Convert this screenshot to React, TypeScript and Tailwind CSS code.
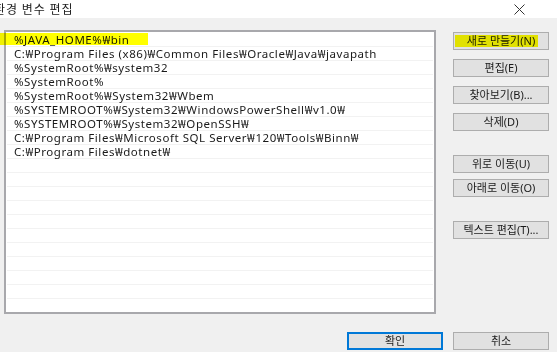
import React from "react";

const rows = [
  "%JAVA_HOME%₩bin",
  "C:₩Program Files (x86)₩Common Files₩Oracle₩Java₩javapath",
  "%SystemRoot%₩system32",
  "%SystemRoot%",
  "%SystemRoot%₩System32₩Wbem",
  "%SYSTEMROOT%₩System32₩WindowsPowerShell₩v1.0₩",
  "%SYSTEMROOT%₩System32₩OpenSSH₩",
  "C:₩Program Files₩Microsoft SQL Server₩120₩Tools₩Binn₩",
  "C:₩Program Files₩dotnet₩",
  "",
  "",
  "",
  "",
  "",
  "",
  "",
  "",
  "",
  "",
];

function Btn({ label, cls = "" }: { label: string; cls?: string }) {
  return (
    <div
      className={`h-[18px] w-[96px] bg-[#e1e1e1] border border-[#adadad] flex items-center justify-center text-[11px] text-[#1a1a1a] ${cls}`}
    >
      {label}
    </div>
  );
}

export default function App() {
  return (
    <div
      className="relative w-[557px] h-[352px] bg-[#f0f0f0] flex flex-col overflow-hidden"
      style={{ fontFamily: '"Noto Sans", "Noto Sans CJK KR", sans-serif' }}
    >
      <div className="h-[18px] bg-white flex items-center justify-between shrink-0">
        <span className="ml-[-6px] text-[12px] tracking-[1px] text-[#222] leading-none" style={{ fontFamily: '"Noto Sans CJK KR", sans-serif' }}>
          환경 변수 편집
        </span>
        <svg width="11" height="11" viewBox="0 0 11 11" className="mr-[32px]">
          <path d="M0.5 0.5 L10.5 10.5 M10.5 0.5 L0.5 10.5" stroke="#333" strokeWidth="1" />
        </svg>
      </div>
      <div className="flex mt-[12px]">
        <div className="ml-[4px] w-[432px] h-[284px] bg-white border-2 border-[#a8a8ac] pt-[1px] px-[1px] overflow-hidden">
          {rows.map((r, i) => (
            <div
              key={i}
              className="h-[14px] shadow-[inset_0_-1px_0_#f2f2f2] pl-[7px] text-[11.5px] tracking-[0.55px] leading-[13px] text-[#1a1a1a] whitespace-nowrap"
            >
              {r}
            </div>
          ))}
        </div>
        <div className="ml-[17px] flex flex-col">
          <Btn label="새로 만들기(N)" cls="mt-[2px]" />
          <Btn label="편집(E)" cls="mt-[9px]" />
          <Btn label="찾아보기(B)..." cls="mt-[9px]" />
          <Btn label="삭제(D)" cls="mt-[9px]" />
          <Btn label="위로 이동(U)" cls="mt-[24px]" />
          <Btn label="아래로 이동(O)" cls="mt-[6px]" />
          <Btn label="텍스트 편집(T)..." cls="mt-[24px]" />
        </div>
      </div>
      <div className="flex justify-end gap-[10px] pr-[8px] mt-[18px]">
        <div className="h-[18px] w-[96px] bg-[#e1e1e1] border-2 border-[#0078d7] flex items-center justify-center text-[11px] text-[#1a1a1a]">
          확인
        </div>
        <Btn label="취소" />
      </div>
      <div className="absolute left-0 top-[33px] w-[148px] h-[12px] bg-[#ffff00] mix-blend-multiply" />
      <div className="absolute left-[455px] top-[35px] w-[83px] h-[12px] bg-[#ffff00] mix-blend-multiply" />
    </div>
  );
}
